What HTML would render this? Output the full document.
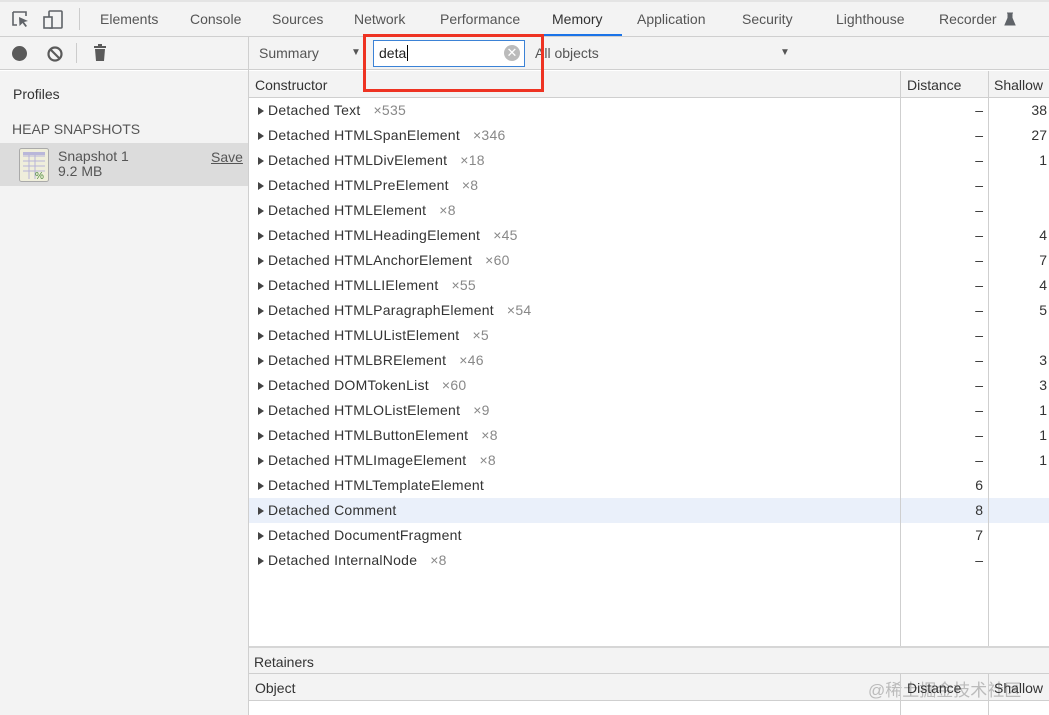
<!DOCTYPE html>
<html><head><meta charset="utf-8"><style>
*{margin:0;padding:0;box-sizing:border-box}
body{width:1049px;height:715px;overflow:hidden;background:#fff;font-family:"Segoe UI","Liberation Sans","Noto Sans CJK SC",sans-serif;font-size:14px;color:#333;position:relative}
.a{position:absolute;white-space:nowrap}
.g{color:#777}
</style></head><body>
<div class="a" style="left:0;top:0;width:1049px;height:37px;background:#f3f3f3;border-top:2px solid #e4e4e4;border-bottom:1px solid #cfcfcf"></div>
<svg class="a" style="left:10px;top:9px" width="60" height="22" viewBox="0 0 60 22">
<path d="M3 3h13v4M3 3v13h4" fill="none" stroke="#5f6368" stroke-width="1.6"/>
<path d="M9 8l9 4-4 1 3 4-1.5 1-3-4-3 3z" fill="#5f6368"/>
<rect x="39" y="2" width="13" height="17" rx="1" fill="none" stroke="#5f6368" stroke-width="1.6"/>
<rect x="34" y="8" width="8" height="11" fill="#f3f3f3" stroke="#5f6368" stroke-width="1.6"/>
</svg>
<div class="a" style="left:79px;top:8px;width:1px;height:22px;background:#ccc"></div>
<div class="a" style="left:100px;top:11px;color:#555">Elements</div>
<div class="a" style="left:190px;top:11px;color:#555">Console</div>
<div class="a" style="left:272px;top:11px;color:#555">Sources</div>
<div class="a" style="left:354px;top:11px;color:#555">Network</div>
<div class="a" style="left:440px;top:11px;color:#555">Performance</div>
<div class="a" style="left:552px;top:11px;color:#333">Memory</div>
<div class="a" style="left:540px;top:34px;width:82px;height:2px;background:#1a73e8"></div>
<div class="a" style="left:637px;top:11px;color:#555">Application</div>
<div class="a" style="left:742px;top:11px;color:#555">Security</div>
<div class="a" style="left:836px;top:11px;color:#555">Lighthouse</div>
<div class="a" style="left:939px;top:11px;color:#555">Recorder</div>
<svg class="a" style="left:1004px;top:12px" width="12" height="14"><path d="M3 1h6M4 1v5L1 13h10L8 6V1" fill="#5f6368" stroke="#5f6368"/></svg>
<div class="a" style="left:0;top:37px;width:1049px;height:33px;background:#f3f3f3;border-bottom:1px solid #cfcfcf"></div>
<div class="a" style="left:12px;top:46px;width:15px;height:15px;border-radius:50%;background:#5a5a5a"></div>
<svg class="a" style="left:46px;top:45px" width="18" height="18"><circle cx="9" cy="9" r="6.5" fill="none" stroke="#5a5a5a" stroke-width="2.2"/><path d="M4.5 4.5l9 9" stroke="#5a5a5a" stroke-width="2.2"/></svg>
<div class="a" style="left:76px;top:43px;width:1px;height:20px;background:#ccc"></div>
<svg class="a" style="left:92px;top:44px" width="16" height="18"><rect x="2" y="2" width="12" height="2" fill="#5a5a5a"/><rect x="6" y="0" width="4" height="2" fill="#5a5a5a"/><path d="M3 5h10l-1 12H4z" fill="#5a5a5a"/></svg>
<div class="a" style="left:248px;top:37px;width:1px;height:678px;background:#cfcfcf"></div>
<div class="a" style="left:259px;top:45px;color:#555">Summary</div>
<div class="a" style="left:351px;top:47px;font-size:10px;color:#555">▼</div>
<div class="a" style="left:373px;top:40px;width:152px;height:27px;background:#fff;border:1px solid #3b82d6"></div>
<div class="a" style="left:379px;top:45px;color:#222">deta<span style="border-left:1px solid #000;margin-left:1px"></span></div>
<div class="a" style="left:504px;top:45px;width:16px;height:16px;border-radius:50%;background:#bbb;color:#fff;font-size:13px;line-height:16px;text-align:center">✕</div>
<div class="a" style="left:535px;top:45px;color:#555">All objects</div>
<div class="a" style="left:780px;top:47px;font-size:10px;color:#555">▼</div>
<div class="a" style="left:0;top:71px;width:248px;height:644px;background:#f3f3f3"></div>
<div class="a" style="left:13px;top:86px;color:#333">Profiles</div>
<div class="a" style="left:12px;top:121px;color:#555">HEAP SNAPSHOTS</div>
<div class="a" style="left:0;top:143px;width:248px;height:43px;background:#dcdcdc"></div>
<svg class="a" style="left:19px;top:148px" width="30" height="34"><rect x="0.5" y="0.5" width="29" height="33" rx="2" fill="#efeedb" stroke="#aaa"/><path d="M4 8h22M4 13h22M4 18h22M4 23h22M10 5v26M16 5v26" stroke="#b7b4d8" stroke-width="1"/><rect x="4" y="4" width="22" height="3" fill="#b9b7d9"/><text x="16" y="31" font-size="10" fill="#4a8a3a" font-family="Liberation Sans">%</text></svg>
<div class="a" style="left:58px;top:149px;color:#555;line-height:15px">Snapshot 1<br>9.2 MB</div>
<div class="a" style="left:211px;top:149px;color:#555;text-decoration:underline">Save</div>
<div class="a" style="left:249px;top:71px;width:800px;height:27px;background:#f3f3f3;border-bottom:1px solid #cfcfcf"></div>
<div class="a" style="left:255px;top:77px;color:#333">Constructor</div>
<div class="a" style="left:907px;top:77px;color:#333">Distance</div>
<div class="a" style="left:994px;top:77px;color:#333">Shallow</div>
<div class="a" style="left:249px;top:498px;width:800px;height:25px;background:#eaf0fa"></div>
<div class="a" style="left:900px;top:71px;width:1px;height:576px;background:#cfcfcf"></div>
<div class="a" style="left:988px;top:71px;width:1px;height:576px;background:#cfcfcf"></div>
<div id="rows"></div>
<div class="a" style="left:249px;top:646px;width:800px;height:28px;background:#f3f3f3;border-top:2px solid #d6d6d6;border-bottom:1px solid #cfcfcf"></div>
<div class="a" style="left:254px;top:654px;color:#333">Retainers</div>
<div class="a" style="left:249px;top:674px;width:800px;height:27px;background:#f3f3f3;border-bottom:1px solid #cfcfcf"></div>
<div class="a" style="left:255px;top:680px;color:#333">Object</div>
<div class="a" style="left:868px;top:676px;color:#bbb;font-size:17px">@稀土掘金技术社区</div>
<div class="a" style="left:907px;top:680px;color:#333">Distance</div>
<div class="a" style="left:994px;top:680px;color:#333">Shallow</div>
<div class="a" style="left:900px;top:674px;width:1px;height:41px;background:#cfcfcf"></div>
<div class="a" style="left:988px;top:674px;width:1px;height:41px;background:#cfcfcf"></div>
<div class="a" style="left:363px;top:34px;width:181px;height:58px;border:3px solid #ee3322"></div>
<script>
var d=[["Text","×535","–","38"],["HTMLSpanElement","×346","–","27"],["HTMLDivElement","×18","–","1"],["HTMLPreElement","×8","–",""],["HTMLElement","×8","–",""],["HTMLHeadingElement","×45","–","4"],["HTMLAnchorElement","×60","–","7"],["HTMLLIElement","×55","–","4"],["HTMLParagraphElement","×54","–","5"],["HTMLUListElement","×5","–",""],["HTMLBRElement","×46","–","3"],["DOMTokenList","×60","–","3"],["HTMLOListElement","×9","–","1"],["HTMLButtonElement","×8","–","1"],["HTMLImageElement","×8","–","1"],["HTMLTemplateElement","","6",""],["Comment","","8",""],["DocumentFragment","","7",""],["InternalNode","×8","–",""]];
var h="";d.forEach(function(r,i){var y=102+i*25;
h+='<svg class="a" style="left:257px;top:'+(y+4)+'px" width="8" height="10"><path d="M1 1l6 4-6 4z" fill="#444"/></svg>';
h+='<div class="a" style="left:268px;top:'+y+'px;color:#333;letter-spacing:0.25px">Detached '+r[0]+'<span style="color:#888;margin-left:13px">'+r[1]+'</span></div>';
h+='<div class="a" style="right:66px;top:'+y+'px;color:#333">'+r[2]+'</div>';
h+='<div class="a" style="right:2px;top:'+y+'px;color:#333">'+r[3]+'</div>';});
document.getElementById("rows").innerHTML=h;
</script>
</body></html>
